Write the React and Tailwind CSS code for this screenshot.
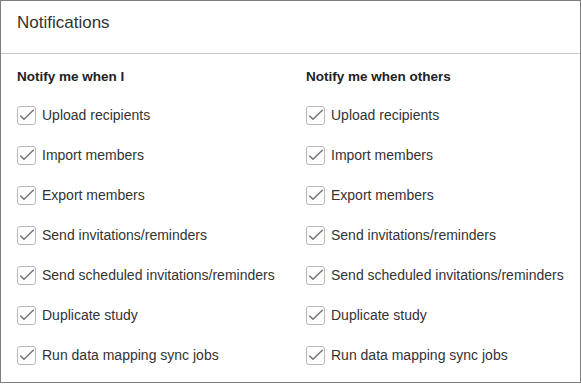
import React from 'react';

const items = [
  'Upload recipients',
  'Import members',
  'Export members',
  'Send invitations/reminders',
  'Send scheduled invitations/reminders',
  'Duplicate study',
  'Run data mapping sync jobs',
];

const Checkbox = () => (
  <span className="w-[19px] h-[19px] shrink-0 rounded-[3px] border border-[#b8b8b8] bg-white flex items-center justify-center">
    <svg width="17" height="17" viewBox="0 0 17 17" fill="none">
      <polyline
        points="2.7,9 6,12.3 15.3,3.3"
        stroke="#777"
        strokeWidth="1.6"
        strokeLinecap="round"
        strokeLinejoin="round"
      />
    </svg>
  </span>
);

const Column = ({ title }) => (
  <div>
    <h3 className="text-[13.5px] leading-[16px] font-bold text-[#222]">{title}</h3>
    <div className="mt-[10px]">
      {items.map((label) => (
        <label key={label} className="h-[40px] flex items-center gap-[6px]">
          <Checkbox />
          <span className="text-[14px] text-[#333]">{label}</span>
        </label>
      ))}
    </div>
  </div>
);

export default function App() {
  return (
    <div className="w-[581px] h-[384px] bg-white" style={{ fontFamily: '"Liberation Sans", Arial, sans-serif' }}>
      <div className="h-[383px] border border-[#7f7f7f]">
        {/* Header */}
        <div className="h-[53px] pt-[11px] px-[16px] border-b border-[#c8c8c8]">
          <h2 className="text-[17px] leading-[21px] text-[#333]">Notifications</h2>
        </div>

        {/* Body */}
        <div className="pl-[16px] pt-[15px] grid grid-cols-[289px_1fr]">
          <Column title="Notify me when I" />
          <Column title="Notify me when others" />
        </div>
      </div>
    </div>
  );
}
